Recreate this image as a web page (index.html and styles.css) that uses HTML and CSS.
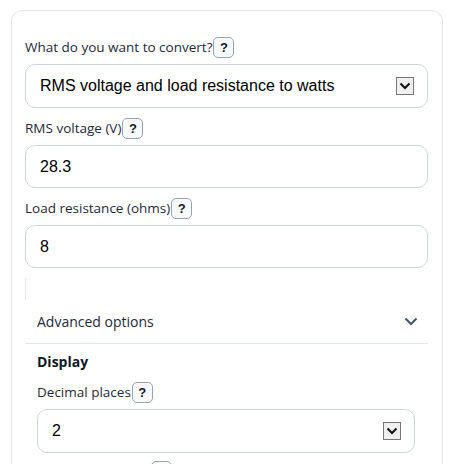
FILE: index.html
```html
<!DOCTYPE html>
<html>
<head>
<meta charset="utf-8">
<link rel="stylesheet" href="styles.css">
</head>
<body>
<div class="card">
  <div class="field">
    <div class="label-row"><span class="label">What do you want to convert?</span><span class="help">?</span></div>
    <div class="control select"><span class="value">RMS voltage and load resistance to watts</span><span class="arrow"><svg width="12" height="8" viewBox="0 0 12 8"><path d="M1.5 1.5 L6 6 L10.5 1.5" fill="none" stroke="#111" stroke-width="2"/></svg></span></div>
  </div>
  <div class="field">
    <div class="label-row"><span class="label">RMS voltage (V)</span><span class="help">?</span></div>
    <div class="control"><span class="value">28.3</span></div>
  </div>
  <div class="field">
    <div class="label-row"><span class="label">Load resistance (ohms)</span><span class="help">?</span></div>
    <div class="control"><span class="value">8</span></div>
  </div>
  <div class="stub"></div>
  <div class="advanced">
    <div class="adv-head"><span>Advanced options</span><svg width="14" height="9" viewBox="0 0 14 9"><path d="M1.5 1.5 L7 7 L12.5 1.5" fill="none" stroke="#475569" stroke-width="2"/></svg></div>
    <div class="adv-body">
      <div class="section-title">Display</div>
      <div class="label-row"><span class="label">Decimal places</span><span class="help">?</span></div>
      <div class="control select"><span class="value">2</span><span class="arrow"><svg width="12" height="8" viewBox="0 0 12 8"><path d="M1.5 1.5 L6 6 L10.5 1.5" fill="none" stroke="#111" stroke-width="2"/></svg></span></div>
      <div class="label-row next"><span class="help ghost"></span></div>
    </div>
  </div>
</div>
</body>
</html>
```
FILE: styles.css
```css
html, body {
  margin: 0;
  padding: 0;
  background: #fff;
  overflow: hidden;
}
body {
  font-family: "Open Sans", "Noto Sans", sans-serif;
  color: #1e293b;
}
.card {
  margin: 10px 11px 0 11px;
  border: 1px solid #e5e7eb;
  border-bottom: none;
  border-radius: 12px 12px 0 0;
  padding: 26px 14px 0 13px;
  height: 460px;
  box-sizing: border-box;
}
.field { margin-bottom: 10px; }
.label-row {
  display: flex;
  align-items: center;
  height: 21px;
  margin-bottom: 6px;
}
.label {
  font-size: 13.5px;
  line-height: 21px;
  color: #1e293b;
}
.help {
  display: inline-flex;
  align-items: center;
  justify-content: center;
  width: 19px;
  height: 19px;
  border: 1px solid #94a3b8;
  border-radius: 5px;
  background: #f8fafc;
  font-family: "Liberation Sans", Arial, sans-serif;
  font-weight: bold;
  font-size: 13px;
  color: #0f172a;
  margin-left: 1px;
}
.control {
  display: flex;
  align-items: center;
  justify-content: space-between;
  height: 41px;
  border: 1px solid #cbd5e1;
  border-radius: 10px;
  padding: 0 13px 0 14px;
  font-family: "Liberation Sans", Arial, sans-serif;
  font-size: 16px;
  color: #000;
}
.arrow {
  display: inline-flex;
  align-items: center;
  justify-content: center;
  width: 16px;
  height: 16px;
  border: 1px solid #767676;
  background: #efefef;
}
.stub {
  margin-top: 9px;
  width: 0;
  height: 22px;
  border-left: 1px solid #e2e8f0;
}
.adv-head {
  display: flex;
  align-items: center;
  justify-content: space-between;
  height: 43px;
  padding: 0 10px 0 12px;
  border-bottom: 1px solid #e2e8f0;
  font-size: 14px;
  color: #1e293b;
}
.adv-body {
  padding: 8px 13px 0 12px;
}
.section-title {
  font-weight: bold;
  font-size: 14px;
  color: #0f172a;
  line-height: 20px;
  margin-bottom: 10px;
}
.control.select { height: 42px; }
.next { margin-top: 8px; }
.ghost { margin-left: 114px; }
```
